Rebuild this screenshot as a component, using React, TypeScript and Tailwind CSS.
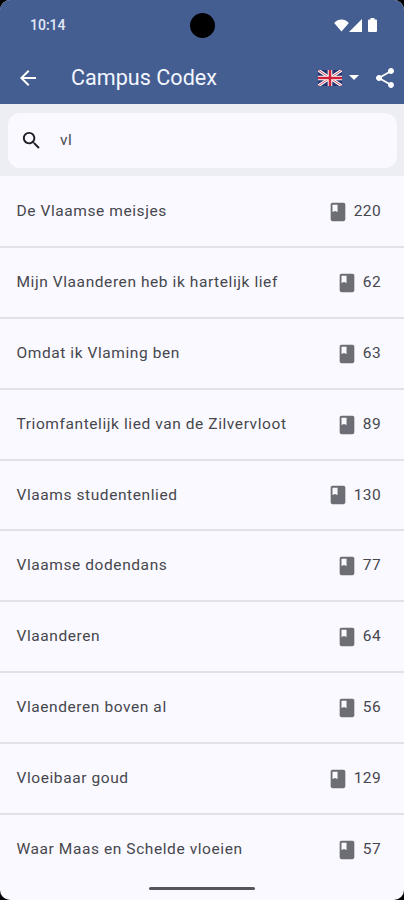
type Song = { title: string; page: number };

const songs: Song[] = [
  { title: 'De Vlaamse meisjes', page: 220 },
  { title: 'Mijn Vlaanderen heb ik hartelijk lief', page: 62 },
  { title: 'Omdat ik Vlaming ben', page: 63 },
  { title: 'Triomfantelijk lied van de Zilvervloot', page: 89 },
  { title: 'Vlaams studentenlied', page: 130 },
  { title: 'Vlaamse dodendans', page: 77 },
  { title: 'Vlaanderen', page: 64 },
  { title: 'Vlaenderen boven al', page: 56 },
  { title: 'Vloeibaar goud', page: 129 },
  { title: 'Waar Maas en Schelde vloeien', page: 57 },
];

function Icon({ d, className }: { d: string; className: string }) {
  return (
    <svg viewBox="0 0 24 24" fill="currentColor" className={className}>
      <path d={d} />
    </svg>
  );
}

function Flag() {
  return (
    <svg viewBox="0 0 24 16" className="h-4 w-6 shrink-0">
      <rect width="24" height="16" fill="#26356f" />
      <path d="M0 0L24 16M24 0L0 16" stroke="#fff" strokeWidth="3" />
      <path d="M0 0L24 16M24 0L0 16" stroke="#d3475a" strokeWidth="1" />
      <path d="M12 0V16M0 8H24" stroke="#fff" strokeWidth="4.6" />
      <path d="M12 0V16M0 8H24" stroke="#cf2039" strokeWidth="2.6" />
    </svg>
  );
}

function StatusBar() {
  return (
    <div className="relative flex h-[50px] items-center justify-between pl-[30px] pr-[27px] text-white">
      <span className="text-[14px] font-medium leading-none text-[#e3e9f8]">10:14</span>
      <span className="absolute left-[190px] top-[13px] size-[25px] rounded-full bg-black" />
      <div className="flex items-center">
        <svg viewBox="0 0 15 13" className="h-[13px] w-[15px]" fill="currentColor">
          <path d="M7.5 12.600L.2 3.900C4.200-.6 10.800-.6 14.800 3.900Z" />
        </svg>
        <svg viewBox="0 0 13 13" className="h-[13px] w-[13px]" fill="currentColor">
          <path d="M0 13L13 0V13Z" />
        </svg>
        <svg viewBox="0 0 9 14" className="ml-[6px] h-[14px] w-[9px]" fill="currentColor">
          <path d="M2.500 0H6.500V1.500H8Q9 1.500 9 2.500V13Q9 14 8 14H1Q0 14 0 13V2.500Q0 1.500 1 1.500H2.500Z" />
        </svg>
      </div>
    </div>
  );
}

export default function App() {
  return (
    <div className="h-[900px] w-[404px] overflow-hidden bg-black font-[Roboto,sans-serif]">
      <div className="flex h-full flex-col overflow-hidden rounded-[10px] bg-[#faf9ff]">
        <header className="h-[104px] shrink-0 bg-[#455e91]">
          <StatusBar />
          <div className="flex h-[55px] items-center pl-4 pr-[7px] text-white">
            <Icon className="size-6 shrink-0" d="M20 11H7.830l5.590-5.590L12 4l-8 8 8 8 1.410-1.410L7.830 13H20v-2z" />
            <h1 className="ml-[31px] flex-1 pt-px text-[21.600px] leading-none text-[#f3f6ff]">Campus Codex</h1>
            <Flag />
            <svg viewBox="0 0 10 5" className="ml-[7px] h-[5px] w-[10px]" fill="currentColor">
              <path d="M0 0H10L5 5Z" />
            </svg>
            <Icon
              className="ml-[14px] size-6 shrink-0"
              d="M18 16.080c-.76 0-1.440.3-1.960.77L8.910 12.700c.05-.23.09-.46.09-.7s-.04-.47-.09-.7l7.050-4.110c.54.5 1.250.81 2.040.81 1.660 0 3-1.340 3-3s-1.340-3-3-3-3 1.340-3 3c0 .24.04.47.09.7L8.040 9.810C7.500 9.310 6.790 9 6 9c-1.660 0-3 1.340-3 3s1.340 3 3 3c.79 0 1.500-.31 2.040-.81l7.120 4.160c-.05.21-.08.43-.08.65 0 1.610 1.310 2.920 2.920 2.920s2.920-1.310 2.920-2.920-1.310-2.920-2.920-2.920z"
            />
          </div>
        </header>
        <div className="h-[72px] shrink-0 bg-[#ededf4] pl-2 pr-[7px] pt-[9px]">
          <div className="flex h-[55px] items-center rounded-[12px] bg-[#faf9ff] pl-3">
            <Icon
              className="size-[23px] text-[#1e1f24]"
              d="M15.500 14h-.79l-.28-.27C15.410 12.590 16 11.110 16 9.500 16 5.910 13.090 3 9.500 3S3 5.910 3 9.500 5.910 16 9.500 16c1.610 0 3.090-.59 4.230-1.570l.27.28v.79l5 4.990L20.490 19l-4.990-5zm-6 0C7.010 14 5 11.990 5 9.500S7.010 5 9.500 5 14 7.010 14 9.500 11.990 14 9.500 14z"
            />
            <span className="ml-[17px] text-[15.500px] leading-none tracking-[0.5px] text-[#4b4c53]">vl</span>
          </div>
        </div>
        <ul className="shrink-0 pt-[1.200px]">
          {songs.map((song) => (
            <li
              key={song.title}
              className="flex h-[70.850px] items-center border-b-2 border-[#e1e1e7] pl-[16.500px] pr-[23px] pt-[0.800px] text-[15.500px] leading-none tracking-[0.580px] text-[#46474d] last:border-transparent"
            >
              <span className="flex-1 whitespace-nowrap">{song.title}</span>
              <Icon
                className="mr-[5px] size-[22px] text-[#6d6e75]"
                d="M18 2H6c-1.100 0-2 .9-2 2v16c0 1.100.9 2 2 2h12c1.100 0 2-.9 2-2V4c0-1.100-.9-2-2-2zM6 4h5.500v8l-2.750-1.200L6 12V4z"
              />
              <span className="tracking-[0.400px]">{song.page}</span>
            </li>
          ))}
        </ul>
        <div className="mx-auto mt-[1.300px] h-[3px] w-[106px] shrink-0 rounded-full bg-[#55555b]" />
      </div>
    </div>
  );
}
